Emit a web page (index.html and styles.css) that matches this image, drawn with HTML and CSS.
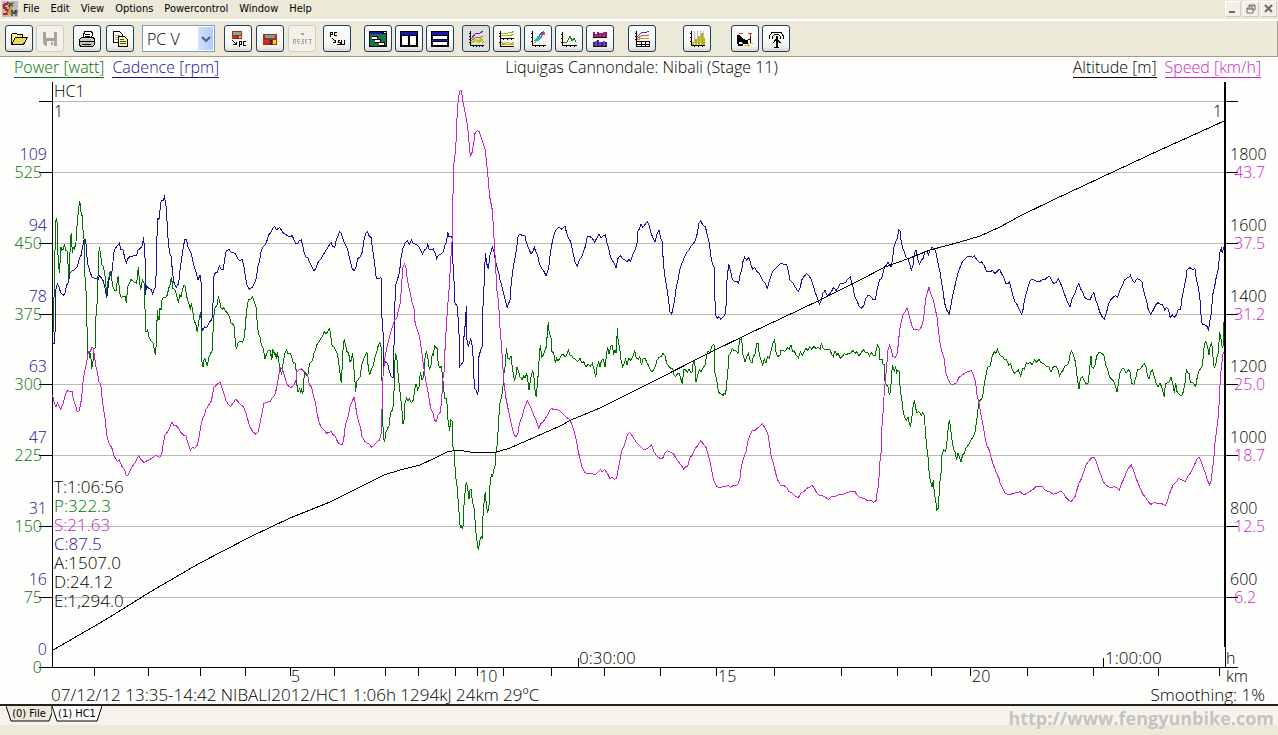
FILE: index.html
```html
<!DOCTYPE html>
<html lang="en">
<head>
<meta charset="utf-8">
<title>Liquigas Cannondale: Nibali (Stage 11)</title>
<link rel="stylesheet" href="styles.css">
</head>
<body>
<header class="menubar">
  <svg class="app-icon" viewBox="0 0 16 16"><rect width="16" height="16" fill="#c2b8b8"/><path d="M0 3h3v3H0zM9 1h3v2H9zM12 9h4v3h-4z" fill="#8f9a98"/><path d="M6 3H3v1H2v3h2v2h2v3H5v1H1" fill="none" stroke="#c8201c" stroke-width="2"/><path d="M5 1l3 2 3 0M8 3v7M6 5h5" fill="none" stroke="#222" stroke-width="1"/><path d="M9 5v9M6 13l2-5" fill="none" stroke="#c9a52c" stroke-width="2"/><path d="M10 15V9l2 4 2-4v6" fill="none" stroke="#222"/></svg>
  <nav class="menus">
    <button>File</button><button>Edit</button><button>View</button><button>Options</button><button>Powercontrol</button><button>Window</button><button>Help</button>
  </nav>
  <div class="winctl">
    <button aria-label="Minimize"><svg viewBox="0 0 10 10"><path d="M1 7h6v2H1z" fill="#6f6b62"/></svg></button>
    <button aria-label="Restore"><svg viewBox="0 0 10 10"><path d="M3 3V1h6v5H7M3 2h6M1 4h6v5H1zM1 5h6" fill="none" stroke="#6f6b62"/></svg></button>
    <button aria-label="Close"><svg viewBox="0 0 10 10"><path d="M1 1l7 7M8 1L1 8" fill="none" stroke="#6f6b62" stroke-width="2"/></svg></button>
  </div>
</header>

<div class="toolbar" role="toolbar" aria-label="Tools">
  <div class="group">
    <button class="tool" aria-label="Open"><svg viewBox="0 0 18 18"><path d="M1.500 14.500v-10l1-1h4l1 1h5v3" fill="#f4ee80" stroke="#000"/><path d="M1.500 14.500l4-7h12l-4 7z" fill="#e8dc54" stroke="#000"/></svg></button>
    <button class="tool off" aria-label="Save" disabled><svg viewBox="0 0 18 18"><path d="M2 2h14v14H4l-2-2z" fill="#a6a49b"/><path d="M5 2h8v6H5zM6 11h7v5H6z" fill="#f3f1ea"/><path d="M10 12h2v3h-2z" fill="#a6a49b"/></svg></button>
  </div>
  <div class="group print">
    <button class="tool" aria-label="Print"><svg viewBox="0 0 18 18"><path d="M4.500 9.500l2-8h7l1 2-1 6" fill="#fff" stroke="#000"/><path d="M7 4h5M7 6h5" stroke="#000"/><path d="M1.500 9.500l2-2h12l1 2v5l-2 2h-12l-1-2z" fill="#c5c6bb" stroke="#000"/><path d="M2 11.500h14M4 14.500h9" stroke="#000"/></svg></button>
    <button class="tool" aria-label="Copy"><svg viewBox="0 0 18 18"><path d="M2.500 1.500h6l3 3v8h-9z" fill="#fff" stroke="#000"/><path d="M4 5.500h5M4 7.500h5M4 9.500h4" stroke="#aaa33d"/><path d="M7.500 6.500h6l3 3v7h-9z" fill="#fff7a8" stroke="#000"/><path d="M9 9.500h4M9 11.500h6M9 13.500h6" stroke="#4b4930"/></svg></button>
  </div>
  <div class="combo"><select aria-label="Device"><option>PC V</option></select><span class="drop"><svg viewBox="0 0 10 8"><path d="M1 2l4 4 4-4" fill="none" stroke="#4d6185" stroke-width="2"/></svg></span></div>
  <div class="group device">
    <button class="tool" aria-label="Download to PC"><svg viewBox="0 0 18 18"><path d="M3 1h10v8H3z" fill="#a22d22"/><path d="M4 2h8v3H4z" fill="#8ea39b"/><path d="M3 6h4v2H3z" fill="#d42a22"/><path d="M10 6h2v2h-2z" fill="#f0cf30"/><path d="M3 10l4 4M4 14.500h3M7.500 12v3M10.500 17v-6h2v3h-2M17 11.500h-2.500v4H17" fill="none" stroke="#000"/></svg></button>
    <button class="tool" aria-label="Device settings"><svg viewBox="0 0 18 18"><path d="M2 4h14v11H2z" fill="#a82d22"/><path d="M4 5h10v3H4z" fill="#69a6a0"/><path d="M2 10h6v3H2z" fill="#e12a22"/><path d="M12 10h3v4h-3z" fill="#f3d12f"/><path d="M9 10h2v2H9zM9 13h2v2H9z" fill="#282828"/></svg></button>
    <button class="tool off" aria-label="Reset" disabled><svg viewBox="0 0 22 18"><path d="M10 2h3v3h-3z" fill="#a5a39b"/><path d="M1.500 14V9.500h2v2h-2M3.500 14v-2M9 9.500H6.500v4H9M7 11.500h2M13 9.500h-2v2h2v2h-3M17 9.500h-2v4h2M15 11.500h2M18 9.500h4M20.500 9v5" fill="none" stroke="#a5a39b"/></svg></button>
  </div>
  <div class="group convert">
    <button class="tool" aria-label="Convert"><svg viewBox="0 0 18 18"><path d="M2.500 7V2.500h2v2h-2M9 2.500H6.500v3H9M4 8l4 4M5 12.500h3M7.500 10v3M12 10.500h-2v2h2v2h-3M13.500 10v4h3v-4" fill="none" stroke="#000"/></svg></button>
  </div>
  <div class="group windows">
    <button class="tool" aria-label="Cascade"><svg viewBox="0 0 18 18"><path d="M0 1h18v16H0z"/><path d="M1 4h16v12H1z" fill="#1b7250"/><path d="M1 2h12v2H1z" fill="#1618b4"/><path d="M15 2h2v1h-2z" fill="#fff"/><path d="M3 6h6v4H3zM6 9h6v4H6zM10 12h6v4h-6z"/><path d="M3 7h5v2H3zM6 10h5v2H6zM10 13h5v2h-5z" fill="#fff"/></svg></button>
    <button class="tool" aria-label="Tile vertically"><svg viewBox="0 0 18 18"><path d="M0 1h18v16H0z"/><path d="M1 2h16v3H1z" fill="#1618b4"/><path d="M2 6h6v9H2zM10 6h6v9h-6z" fill="#fff"/></svg></button>
    <button class="tool" aria-label="Tile horizontally"><svg viewBox="0 0 18 18"><path d="M0 1h18v16H0z"/><path d="M1 2h16v3H1zM1 10h16v1H1z" fill="#1618b4"/><path d="M2 6h14v3H2zM2 12h14v3H2z" fill="#fff"/></svg></button>
  </div>
  <div class="group views">
    <button class="tool on" aria-label="Overlay chart"><svg viewBox="0 0 18 18"><path d="M3.500 1v14.500H17M2 3h2M2 6h2M2 9h2M2 12h2M6 17v-2M9 17v-2M12 17v-2M15 17v-2" fill="none" stroke="#000"/><path d="M4 9l5-6 3 1 4-3" fill="none" stroke="#5b2ab0"/><path d="M4 11l5-4 3 1 4-2" fill="none" stroke="#e0503c"/><path d="M4 13l5-3 3 2 2-3 3 4" fill="none" stroke="#a9d020" stroke-width="2"/></svg></button>
    <button class="tool" aria-label="Stacked chart"><svg viewBox="0 0 18 18"><path d="M2.500 1v7.500H16M2.500 9v7.500H16M1 3h2M1 6h2M1 12h2M5 8v2M9 8v2M13 8v2" fill="none" stroke="#000"/><path d="M3 4l3-1 3 1 2-2 2 1 3-2M3 6l4-1 4 1 5-2" fill="none" stroke="#94bb22"/><path d="M3 12l3 2 3-2 4 2 3-2M3 14h13" fill="none" stroke="#d3a820"/></svg></button>
    <button class="tool" aria-label="Scatter chart"><svg viewBox="0 0 18 18"><path d="M3.500 1v14.500H17M2 3h2M2 7h2M2 11h2M6 17v-2M10 17v-2M14 17v-2" fill="none" stroke="#000"/><path d="M6 11l4-5M8 11l4-4" stroke="#27b3d0" stroke-width="2"/><path d="M10 5l5-3" stroke="#3450ca" stroke-width="2"/><path d="M12 6l4-3" stroke="#e25a31" stroke-width="2"/><path d="M4 14l4-3" stroke="#c6b527"/></svg></button>
    <button class="tool" aria-label="Distribution chart"><svg viewBox="0 0 18 18"><path d="M2.500 2v13.500H17M1 4h2M1 8h2M1 12h2M6 17v-2M10 17v-2M14 17v-2" fill="none" stroke="#000"/><path d="M3 12l4 0 2-4 1-2 2 5 2-3 2 4" fill="none" stroke="#2c7a2e"/></svg></button>
    <button class="tool" aria-label="Histogram"><svg viewBox="0 0 18 18"><path d="M2 7.500h14M2 16.500h14" stroke="#111"/><path d="M3 7V2M7 7V2M11 7V3M15 7V2" stroke="#7c2086" stroke-width="2"/><path d="M5 7V4M9 7V3M13 7V2" stroke="#c62a4a" stroke-width="2"/><path d="M3 16v-4M7 16v-6M11 16v-4M15 16v-4" stroke="#2a24a0" stroke-width="2"/><path d="M5 16v-5M9 16v-4M13 16v-5" stroke="#8d3d97" stroke-width="2"/></svg></button>
  </div>
  <div class="group table">
    <button class="tool" aria-label="Chart with table"><svg viewBox="0 0 18 18"><path d="M3.500 1v10M2 3h2M2 6h2M2 9h2" stroke="#000"/><path d="M4 7l5-5 3 1 4-2" fill="none" stroke="#5b2ab0"/><path d="M4 9l5-4 3 1 4-1" fill="none" stroke="#e0503c"/><path d="M4 10l5-2 3 1 4-1" fill="none" stroke="#e38a3a"/><path d="M3.500 11.500h13v5h-13zM3 14h14M8 11v6M12 11v6" fill="#fff" stroke="#000"/></svg></button>
  </div>
  <div class="group bars">
    <button class="tool" aria-label="Bar chart"><svg viewBox="0 0 18 18"><path d="M6 1v12M9 1v12M12 1v12M15 1v12" stroke="#bbb"/><path d="M3.500 1v14.500H17M2 3h2M2 7h2M2 11h2M6 17v-2M10 17v-2M14 17v-2" fill="none" stroke="#000"/><path d="M5 15v-3M8 15V9M11 15V6M14 15V3M16 15V8" stroke="#b7b30a" stroke-width="2"/></svg></button>
  </div>
  <div class="group bike">
    <button class="tool" aria-label="Rider position"><svg viewBox="0 0 18 18"><path d="M1 5h2l3 3 4 2 2 2v2H8l-3-2H3v2H1z"/><path d="M10 11l4-2V5M14 9v5" fill="none" stroke="#000"/><path d="M3 3.500h4M12 3.500h4M14.500 4v3" stroke="#e33a2c"/><path d="M2 14h5v2H2z"/><path d="M8 15.500h6M12 13v4M14 13.500h3" stroke="#cbb62b"/></svg></button>
    <button class="tool" aria-label="Transmit"><svg viewBox="0 0 18 18"><path d="M9 6v11M10 6v11M7 17.500h5M9.500 9L6 13M9.500 9l4 4" fill="none" stroke="#000"/><path d="M2.500 9V6l3-4h8l3 4v3M5.500 9V7l2-3h4l2 3v2" fill="none" stroke="#000"/></svg></button>
  </div>
</div>

<main class="view">
  <div class="legend">
    <div class="side"><span class="power">Power [watt]</span><span class="cadence">Cadence [rpm]</span></div>
    <h1>Liquigas Cannondale: Nibali (Stage 11)</h1>
    <div class="side right"><span class="altitude">Altitude [m]</span><span class="speed">Speed [km/h]</span></div>
  </div>
  <svg class="chart" viewBox="0 80 1278 605" preserveAspectRatio="none" role="img" aria-label="Ride chart">
    <path class="grid" d="M53 101.500H1224M53 172.500H1224M53 243.500H1224M53 314.500H1224M53 384.500H1224M53 455.500H1224M53 526.500H1224M53 597.500H1224"/>
    <g class="labels power" text-anchor="end">
      <text x="42" y="178">525</text><text x="42" y="249">450</text><text x="42" y="320">375</text><text x="42" y="390">300</text><text x="42" y="461">225</text><text x="42" y="532">150</text><text x="42" y="603">75</text><text x="42" y="673">0</text>
    </g>
    <g class="labels cadence" text-anchor="end">
      <text x="47" y="160">109</text><text x="47" y="231">94</text><text x="47" y="302">78</text><text x="47" y="372">63</text><text x="47" y="443">47</text><text x="47" y="514">31</text><text x="47" y="585">16</text><text x="47" y="655">0</text>
    </g>
    <g class="labels altitude">
      <text x="1230" y="160">1800</text><text x="1230" y="231">1600</text><text x="1230" y="302">1400</text><text x="1230" y="372">1200</text><text x="1230" y="443">1000</text><text x="1230" y="514">800</text><text x="1230" y="585">600</text>
      <text x="1226" y="664">h</text><text x="1226" y="682">km</text>
    </g>
    <g class="labels speed">
      <text x="1234" y="178">43.7</text><text x="1234" y="249">37.5</text><text x="1234" y="320">31.2</text><text x="1234" y="390">25.0</text><text x="1234" y="461">18.7</text><text x="1234" y="532">12.5</text><text x="1234" y="603">6.2</text>
    </g>
    <path class="axis" d="M52.500 82V667M39 101.500H52M39 172.500H52M39 243.500H52M39 314.500H52M39 384.500H52M39 455.500H52M39 526.500H52M39 597.500H52M39 667.500H1238M1225.500 640V667M1226 101.500h12M1226 172.500h12M1226 243.500h12M1226 314.500h12M1226 384.500h12M1226 455.500h12M1226 526.500h12M1226 597.500h12"/>
    <path class="axis" d="M94.500 668v8M148.500 668v8M200.500 668v8M245.500 668v8M290.500 668v8M334.500 668v8M385.500 668v8M418.500 668v8M455.500 668v8M477.500 668v8M503.500 668v8M551.500 668v8M604.500 668v8M660.500 668v8M716.500 668v8M774.500 668v8M841.500 668v8M897.500 668v8M931.500 668v8M970.500 668v8M1027.500 668v8M1093.500 668v8M1158.500 668v8M1219.500 668v8M578.500 658v9M1103.500 658v9"/>
    <path class="edge" d="M1225 82V647"/>
    <g class="labels altitude">
      <text x="54" y="97">HC1</text><text x="54" y="117">1</text><text x="1213" y="117">1</text>
      <text x="291" y="682">5</text><text x="479" y="682">10</text><text x="718" y="682">15</text><text x="972" y="682">20</text>
    </g>
    <g class="labels readout">
      <text class="altitude" x="579" y="664">0:30:00</text><text class="altitude" x="1105" y="664">1:00:00</text>
      <text class="altitude" x="54" y="493">T:1:06:56</text><text class="power" x="54" y="512">P:322.3</text><text class="speed" x="54" y="531">S:21.63</text><text class="cadence" x="54" y="550">C:87.5</text><text class="altitude" x="54" y="569">A:1507.0</text><text class="altitude" x="54" y="588">D:24.12</text><text class="altitude" x="54" y="607">E:1,294.0</text>
    </g>

    <g class="trace power">
      <polyline transform="translate(0 180) scale(.33333)" points="160,455 163,300 167,125 169,118 172,130 172,190 175,240 178,278 181,235 183,200 185,210 190,208 193,192 197,210 201,213 204,250 206,302 209,250 211,180 214,158 217,220 220,200 223,210 228,185 230,150 234,105 239,62 243,95 247,110 250,170 253,180 255,290 258,330 261,440 263,525 267,515 269,535 272,520 275,568 279,545 281,505 285,505 288,410 292,360 294,290 296,225 298,200 302,225 306,255 310,260 314,280 317,305 320,348 323,310 327,290 331,272 335,295 338,320 343,330 348,332 352,300 355,287 359,340 363,352 370,350 375,348 379,369 383,320 388,310 393,298 398,303 405,308 410,310 415,262 418,300 422,330 427,300 432,310 434,330 436,440 438,457 443,450 448,475 455,485 460,490 463,510 466,525 469,490 472,390 475,415 477,420 480,385 483,390 486,360 490,352 497,352 502,345 506,325 510,315 514,290 519,325 525,330 530,345 535,368 539,345 543,350 547,330 552,315 556,320 559,345 563,360 568,375 571,390 574,370 578,390 582,420 588,435 592,457 597,420 602,395 604,430 606,545 609,562 613,535 616,540 622,558 627,530 632,520 637,510 640,430 643,395 646,380 650,380 655,352 659,362 663,385 667,388 672,383 677,393 683,400 688,410 693,430 698,432 703,440 706,490 709,508 714,490 720,483 727,487 732,475 736,440 739,400 743,370 747,357 752,360 757,350 763,365 768,380 771,420 775,460 780,470 784,495 790,505 795,537 800,520 805,512 811,512 815,540 820,512 825,520 829,535 833,522 837,550 840,562"/>
      <polyline transform="translate(270 180) scale(.33333)" points="0,520 4,530 8,512 13,522 18,528 22,520 27,548 30,562 35,585 40,545 45,520 50,510 54,522 60,520 65,530 70,550 75,548 79,575 80,610 84,635 89,625 92,640 95,625 97,640 100,635 101,600 104,580 109,585 113,590 116,565 120,550 124,545 128,540 132,520 137,508 142,490 148,485 152,475 158,468 163,455 168,462 173,455 179,445 183,475 187,500 191,500 196,510 201,518 205,540 209,570 214,610 217,550 220,490 223,480 227,495 231,515 236,520 240,545 244,540 248,518 251,560 254,590 257,635 260,605 264,600 270,590 275,555 280,540 286,525 291,518 295,565 299,585 305,565 310,555 315,530 320,518 325,495 329,487 333,500 336,600 338,720 341,775 344,785 348,755 353,745 358,735 361,700 367,690 371,670 373,600 375,540 377,518 381,540 385,590 390,635 395,680 399,733 403,715 405,670 410,655 414,662 418,655 424,668 430,660 434,630 438,612 443,628 448,620 451,575 456,600 461,590 464,540 469,513 473,530 478,570 483,555 487,520 490,525 494,498 501,505 505,555 509,562 514,560 518,590 521,630 525,655 530,655 534,720 539,752 542,720 546,722 549,800 553,815 555,860 557,895"/>
      <polyline transform="translate(430 80) scale(.33333)" points="77,1195 79,1200 82,1225 85,1270 88,1310 91,1345 94,1338 97,1345 100,1335 102,1275 105,1240 109,1205 113,1225 117,1257 120,1230 124,1230 127,1265 132,1285 135,1320 139,1370 145,1410 149,1385 153,1370 157,1375 159,1310 162,1270 166,1235 169,1275 173,1300 177,1275 180,1215 184,1185 188,1190 191,1170 195,1160 198,1120 202,1090 205,1040 208,990 211,960 214,955 218,930 220,905 223,865 226,860 229,805 233,835 238,838 243,827 247,865 253,900 257,895 261,860 266,875 270,890 276,900 281,888 285,895 290,880 294,905 297,930 302,895 308,870 312,895 316,940 319,952 323,900 326,870 328,820 331,795 335,830 340,825 345,810 349,800 352,760 355,725 358,765 360,765"/>
      <polyline transform="translate(500 200) scale(.33333)" points="150,405 155,420 155,455 160,457 163,468 166,488 170,475 174,483 180,475 185,465 191,465 196,470 200,465 205,450 210,465 215,467 220,475 226,478 233,485 240,475 245,488 251,485 257,500 265,493 271,498 277,490 282,508 287,532 291,500 296,485 300,500 305,480 310,478 315,500 320,460 323,440 327,462 332,440 336,435 341,460 345,450 349,460 352,385 355,430 359,440 362,475 368,500 373,490 377,478 381,495 386,475 392,480 398,470 404,452 409,475 415,478 419,470 424,495 430,475 436,475 440,488 445,495 450,508 456,517 461,508 466,500 471,480 478,472 484,470 489,460 495,468 500,490 506,498 512,505 518,505 522,525 527,530 533,520 538,520 542,535 547,552 551,510 557,510 562,518 567,508 572,518 577,515 580,480 584,482 588,545 593,525 598,510 604,515 608,505 615,495 620,465 624,452 629,460 635,440 638,435 642,433 645,470 645,520 650,540 655,575 660,580 665,583 669,587 672,580 677,583 680,550 684,510 686,465 691,462 697,445 702,452 708,452 714,460 719,420 725,415 729,465 735,485 740,470 745,460 750,480 756,490 760,470 766,460 770,430 774,430 778,465 783,480 788,495 793,478 798,490 803,470 808,475 814,450 820,425 824,420 828,455 833,470 840,465"/>
      <polyline transform="translate(780 200) scale(.33333)" points="0,465 2,452 8,450 14,455 18,450 23,443 28,447 33,435 38,455 43,452 48,465 55,473 61,455 67,465 72,455 78,445 83,450 90,440 95,447 102,440 108,445 115,442 121,447 124,430 129,445 135,448 142,450 150,450 156,465 160,470 165,452 170,465 174,460 181,475 188,468 193,460 198,465 205,460 213,460 219,450 225,460 231,455 237,468 243,460 250,448 256,458 263,458 268,468 275,458 280,468 286,468 289,445 293,435 297,445 300,478 306,478 309,492 313,495 314,540 319,555 324,560 328,585 332,572 335,515 338,500 343,512 347,502 350,518 354,510 357,512 359,545 362,580 367,610 370,640 375,655 380,660 384,650 387,665 391,678 395,660 398,625 403,600 407,625 411,638 417,635 424,645 428,637 433,648 436,690 440,740 445,780 448,830 453,850 456,860 460,840 463,880 467,900 470,930 475,925 477,890 479,850 483,820 486,765 491,750 497,755 500,735 504,690 508,660 512,685 515,715 520,745 525,755 530,780 534,760 538,770 543,785 548,765 553,760 558,745 565,735 572,722 580,710 585,695 589,670 593,640 596,605 602,600 608,590 611,565 615,540 619,520 623,502 631,498 635,475 642,455 648,460 652,448 657,460 660,466"/>
      <polyline transform="translate(1000 200) scale(.33333)" points="0,466 8,470 13,480 20,480 26,495 32,490 37,510 44,520 50,515 55,510 62,528 68,505 73,508 79,488 85,490 91,488 96,495 103,480 110,487 117,477 123,488 130,490 135,495 141,500 146,498 153,517 160,500 168,498 174,510 179,528 185,515 190,510 195,497 201,495 206,490 210,465 214,453 219,462 224,475 228,500 232,535 237,567 241,535 247,530 252,540 258,553 265,548 270,495 273,467 275,500 280,505 285,495 290,468 297,458 307,460 313,470 317,495 323,510 328,530 335,538 341,543 347,560 351,577 356,545 360,518 367,505 373,507 378,520 385,510 390,515 395,550 402,553 408,530 412,510 419,508 426,500 433,490 438,500 443,530 447,538 452,515 457,510 463,530 468,550 474,560 480,548 486,565 490,580 493,590 496,552 502,548 508,545 513,532 518,550 523,580 527,550 531,575 538,583 545,588 550,575 555,550 559,510 564,520 568,520 571,548 577,547 582,552 587,560 592,530 596,515 602,505 608,495 610,460 614,430 618,425 623,440 627,465 631,435 635,428 639,470 643,505 648,490 652,465 656,460 658,395 662,410 667,445 670,435 671,365"/>
    </g>
    <g class="trace cadence">
      <polyline transform="translate(0 180) scale(.33333)" points="158,493 163,490 165,460 167,380 167,330 172,310 176,318 182,338 190,346 195,340 200,315 206,305 209,280 215,273 225,268 232,260 238,235 244,225 247,205 252,180 257,178 260,220 263,250 270,275 276,292 290,297 294,300 298,287 304,293 310,303 315,325 320,355 324,325 328,290 333,285 337,270 341,220 346,205 352,197 358,190 363,210 369,210 374,232 379,250 384,235 390,229 400,228 410,225 414,210 420,206 427,197 431,170 433,205 436,250 436,345 440,318 446,325 453,328 458,341 462,330 467,320 470,230 472,115 477,118 480,90 484,60 489,62 493,50 497,68 500,95 502,150 505,185 509,220 513,228 517,270 521,305 529,323 536,310 540,270 545,235 550,200 555,177 560,180 564,200 568,210 574,222 578,240 583,262 589,280 594,300 600,285 603,300 605,440 608,450 614,441 620,443 626,430 634,420 638,410 641,290 646,278 652,278 658,258 665,270 670,270 674,235 679,212 687,208 693,217 700,218 707,222 714,238 720,242 726,238 731,255 736,290 741,315 747,328 757,322 766,305 770,290 773,260 778,245 784,210 790,200 795,195 800,185 806,165 812,158 818,145 824,140 829,150 835,145 840,142"/>
      <polyline transform="translate(270 180) scale(.33333)" points="30,143 38,157 45,162 52,167 60,170 67,167 72,180 78,190 84,190 88,182 94,180 99,200 103,222 108,232 113,232 118,245 125,258 132,273 139,262 145,245 152,238 158,228 165,215 172,205 178,195 184,188 188,200 194,202 199,180 205,165 209,155 214,160 219,178 225,192 232,205 239,235 245,262 252,273 258,260 263,235 270,232 277,215 283,175 288,160 292,155 297,167 303,172 308,210 314,250 319,297 326,297 333,292 335,400 340,470 341,560 347,545 353,550 357,570 364,590 370,592 372,500 376,320 382,300 389,275 392,240 399,205 405,190 412,182 418,192 424,180 430,190 438,193 446,200 452,210 458,222 464,210 470,205 473,190 478,210 484,210 490,207 496,222 500,235 506,225 513,222 520,215 525,195 530,185 533,155 537,170 543,168 547,175 549,250 553,320 555,368 562,380 566,440 569,500 569,560 575,552 580,545 582,470 586,430 589,378 591,480 595,500 602,475 607,500 610,540 613,625 618,630 622,642 626,630 627,530 632,510 637,500 639,380 643,300 646,220 650,250 655,267 660,225 667,202 672,215 677,245 683,270 690,290 690,300"/>
      <polyline transform="translate(500 200) scale(.33333)" points="0,240 6,260 13,290 20,318 22,320 30,300 34,245 40,200 46,170 50,145 54,110 60,102 67,107 74,105 80,130 86,145 93,162 98,155 103,142 107,155 113,165 118,190 125,205 131,212 138,227 143,215 147,195 151,160 157,125 163,100 170,87 178,82 185,87 195,78 200,100 206,115 212,125 217,150 222,170 226,190 232,198 238,180 245,172 250,155 256,140 262,108 270,110 277,115 284,127 290,115 297,103 303,113 309,108 316,105 321,130 326,145 331,170 337,182 343,190 348,203 354,175 361,167 368,177 374,178 380,185 387,178 392,183 398,165 405,150 411,130 413,95 419,85 423,72 429,82 436,72 442,65 447,75 452,95 459,115 465,125 470,105 477,90 482,115 487,125 490,190 495,230 500,260 505,295 510,335 515,342 520,320 525,290 529,260 534,240 539,210 546,190 553,172 560,158 567,150 573,138 580,130 586,122 592,100 597,70 602,62 608,75 616,80 622,105 628,130 632,165 637,190 642,200 644,260 646,345 652,355 656,350 662,357 668,353 675,343 679,310 681,240 686,193 691,210 696,235 703,245 710,243 716,250 720,225 725,210 729,185 734,172 740,180 747,173 753,195 758,207 764,202 770,215 777,218 783,230 790,245 797,250 802,268 807,245 812,230 818,215 825,207 832,200 840,193"/>
      <polyline transform="translate(780 200) scale(.33333)" points="0,190 10,192 20,195 25,215 30,240 38,248 46,262 55,275 61,262 65,240 72,230 80,220 88,230 94,238 99,255 105,275 112,295 118,312 124,300 129,280 135,270 142,288 148,283 154,275 161,262 168,272 175,262 181,250 188,250 197,247 205,235 211,230 214,245 219,260 224,290 230,300 237,318 246,325 252,315 257,295 265,286 273,290 279,300 286,298 292,265 299,240 305,235 310,215 315,198 320,195 324,185 328,195 334,200 337,180 342,140 347,125 352,115 356,90 360,92 363,120 368,145 373,155 377,170 383,175 389,190 394,210 399,195 403,160 408,150 412,175 418,193 424,180 430,175 434,155 440,155 445,165 450,150 456,143 462,145 467,155 470,170 475,195 480,215 485,250 490,280 494,310 500,330 508,342 513,315 517,290 523,265 529,240 535,215 541,200 547,185 554,178 562,170 570,168 577,172 583,168 590,178 598,188 604,185 612,195 620,215 628,215 638,212 645,222 650,215 658,208 660,210"/>
      <polyline transform="translate(1000 200) scale(.33333)" points="0,210 5,222 11,230 17,250 23,252 28,245 33,265 38,285 45,305 52,315 58,330 65,343 70,325 73,300 79,280 84,262 90,242 98,238 108,243 118,245 127,240 136,238 142,232 149,228 155,242 161,250 168,248 175,235 180,245 186,262 192,278 199,298 205,312 210,322 215,300 221,288 227,275 231,260 236,250 241,265 247,275 254,292 262,298 270,300 276,285 282,278 287,300 293,315 299,335 306,350 313,358 319,340 325,315 331,300 339,292 346,287 353,292 360,270 367,257 373,240 380,235 386,232 391,226 397,240 404,248 411,236 419,240 426,245 430,270 436,290 441,310 445,330 452,342 460,330 467,315 474,308 481,313 488,315 494,330 500,322 506,330 510,352 517,345 523,352 529,345 534,330 542,328 546,295 552,265 558,235 561,210 570,203 577,208 585,206 589,240 595,260 600,300 603,345 607,375 614,375 620,377 626,390 630,360 634,340 638,285 644,260 649,230 655,205 660,155 664,145 667,160 671,140"/>
    </g>
    <g class="trace speed">
      <polyline transform="translate(0 180) scale(.33333)" points="158,645 163,672 168,680 172,668 177,678 182,688 188,675 192,660 197,640 204,630 210,635 216,633 220,655 226,675 232,696 238,693 243,665 247,630 250,595 255,570 260,545 265,515 270,515 276,502 280,505 283,525 288,560 293,580 297,605 302,612 306,650 311,690 316,720 320,765 326,787 336,805 342,827 352,845 358,840 366,860 374,870 379,888 384,885 390,872 398,858 406,848 416,828 424,840 432,848 440,843 450,838 460,832 468,826 480,832 485,822 490,790 495,765 503,755 510,740 516,725 522,738 530,738 536,745 542,757 550,765 558,768 564,790 571,810 577,802 585,805 592,795 598,765 605,725 612,708 618,688 626,675 633,665 638,645 641,622 648,617 655,610 661,608 666,625 672,642 678,662 684,672 692,680 700,668 707,658 714,665 720,672 730,680 738,700 745,725 750,740 758,755 768,763 775,755 781,725 786,700 792,670 800,667 810,665 816,655 824,645 830,625 836,590 840,562"/>
      <polyline transform="translate(270 180) scale(.33333)" points="30,562 35,565 40,575 45,595 50,610 56,620 63,622 72,615 78,600 80,575 88,570 94,567 101,573 108,578 114,590 118,615 125,622 131,650 136,665 141,700 147,725 153,742 162,750 170,760 178,757 184,755 190,765 197,770 203,787 210,792 216,795 221,780 224,750 229,725 235,708 240,680 246,665 252,652 256,670 260,700 267,730 272,745 276,770 284,783 292,790 298,792 303,802 312,795 320,787 328,780 333,765 336,690 338,600 342,560 345,530 349,510 355,485 360,465 367,440 374,420 380,415 385,390 391,370 395,310 399,260 404,250 408,265 411,290 416,320 422,345 427,370 432,385 434,420 440,445 446,460 450,480 455,515 461,560 466,595 472,625 477,655 482,685 489,700 493,720 499,725 504,705 510,698 515,665 518,600 523,570 525,510 529,440 533,380 538,320 542,240 546,190"/>
      <polyline transform="translate(430 80) scale(.33333)" points="66,490 67,420 68,360 71,310 72,250 77,210 80,140 82,90 86,50 90,32 94,32 98,60 102,80 107,105 113,140 117,185 121,230 127,215 131,190 135,160 142,152 148,155 153,170 159,190 166,210 170,250 175,300 179,350 187,390 190,440 193,490 197,560 200,625 206,670 209,730 213,780 218,850 221,900 227,950 235,990 241,1020 247,1045 253,1065 259,1070 264,1060 268,1030 276,1010 284,980 292,962 299,975 305,990 311,1005 318,1020 326,1045 333,1030 340,1025 350,1010 360,990"/>
      <polyline transform="translate(500 200) scale(.33333)" points="150,630 155,625 162,630 170,628 180,633 190,643 200,652 210,660 218,680 224,700 230,725 235,755 241,780 246,800 254,818 264,820 275,820 285,825 295,815 301,808 306,815 314,808 322,820 330,835 337,833 343,838 350,835 354,810 360,780 365,752 371,740 377,725 382,705 388,697 394,703 401,715 410,728 420,738 432,750 442,745 455,735 462,755 470,768 480,775 488,775 494,760 503,752 512,758 520,760 527,773 535,785 543,795 551,807 558,800 563,798 569,775 577,765 584,748 592,738 602,722 610,732 618,742 625,765 630,785 635,810 641,840 650,860 660,862 672,860 685,857 692,862 702,855 710,857 715,850 720,835 724,800 730,775 738,755 743,725 750,705 757,692 765,692 771,685 780,678 787,672 794,682 803,700 808,730 813,765 820,790 827,820 833,840 840,852"/>
      <polyline transform="translate(780 200) scale(.33333)" points="0,855 12,857 20,862 27,875 37,880 45,888 55,893 64,877 72,875 80,865 88,862 96,855 103,865 110,878 118,887 130,888 138,893 146,898 154,890 165,890 175,885 188,885 200,878 212,875 225,873 230,885 240,893 252,895 262,902 272,900 280,907 288,902 291,880 296,855 299,790 303,760 305,690 309,640 312,590 317,530 320,500 324,450 329,435 334,450 339,470 346,472 352,460 355,430 359,390 364,365 370,340 376,335 381,325 386,340 391,360 396,378 402,388 410,388 416,391 424,382 431,355 434,325 438,290 443,275 447,262 454,285 460,300 465,325 471,350 475,390 480,430 487,460 493,478 497,515 503,535 510,550 517,555 524,550 530,548 537,532 546,525 556,518 565,515 573,511 578,520 583,535 587,545 590,580 597,610 602,640 608,670 613,700 620,735 628,750 634,775 641,797 650,820 658,838 660,850"/>
      <polyline transform="translate(1000 200) scale(.33333)" points="0,850 6,862 14,878 22,883 35,882 48,878 60,875 68,882 75,883 85,877 97,870 108,860 120,860 128,860 136,872 148,875 160,883 170,880 182,873 190,880 198,892 205,900 212,905 219,898 225,890 230,872 237,850 245,835 251,815 258,795 265,785 275,773 283,772 289,785 296,808 303,825 308,842 318,855 330,863 342,860 350,863 358,870 365,850 372,835 378,820 385,805 394,795 400,810 407,830 414,850 421,865 428,882 437,893 445,905 453,913 463,907 475,912 485,910 495,918 502,905 507,885 513,870 519,855 527,848 536,835 545,840 556,845 563,830 574,815 583,795 592,775 598,772 604,785 610,805 617,820 622,840 629,855 634,840 637,810 641,780 645,730 650,690 656,640 659,570 664,500 670,455"/>
    </g>
    <polyline class="trace altitude" points="53,650 100,623 118,612 150,592 200,563 250,537 290,518 330,502 370,482 384,475 400,470 420,465 435,458 447,452 457,450 470,452 492,453 500,451 510,448 535,437 560,426 571,420 600,408 650,383 707,354 750,333 780,319 820,300 860,280 885,267 910,258 930,250 960,242 980,236 1000,227 1020,216 1053,200 1100,178 1160,150 1200,132 1224,121"/>
  </svg>
  <div class="summary"><span>07/12/12 13:35-14:42 NIBALI2012/HC1 1:06h 1294kJ 24km 29ºC</span><span>Smoothing: 1%</span></div>
</main>

<footer class="bottom">
  <div class="tabs">
    <button class="tab"><svg class="tab-shape" viewBox="0 0 46 16" preserveAspectRatio="none"><path d="M0 0l5 15h38l3-8V0" fill="#ece9d8" stroke="#000"/></svg><span>(0) File</span></button>
    <button class="tab current"><svg class="tab-shape" viewBox="0 0 50 16" preserveAspectRatio="none"><path d="M0 0l5 15h40l5-15" fill="#fefefc" stroke="#000"/></svg><span>(1) HC1</span></button>
  </div>
  <a class="site" href="http://www.fengyunbike.com">http://www.fengyunbike.com</a>
</footer>
</body>
</html>
```
FILE: styles.css
```css
* { box-sizing: border-box; }
body {
  margin: 0;
  min-height: 100vh;
  display: flex;
  flex-direction: column;
  background: #ece9d8;
  color: #000;
  font-family: "Noto Sans", "Open Sans", sans-serif;
}
button, select { font: inherit; color: inherit; border: 0; background: none; padding: 0; margin: 0; }
svg { display: block; }

.menubar { display: flex; align-items: center; height: 21px; padding: 0 0 2px 2px; border-bottom: 2px solid #fefefc; background: #ece9d8; }
.app-icon { width: 16px; height: 16px; }
.menus { display: flex; gap: 11px; margin-left: 5px; font-family: "DejaVu Sans Condensed", sans-serif; font-size: 11px; line-height: 16px; }
.winctl { display: flex; gap: 2px; margin-left: auto; padding-right: 1px; }
.winctl button { width: 16px; height: 16px; padding: 2px; background: #f2f0e6; border: 1px solid; border-color: #fff #d2cfc0 #d2cfc0 #fff; }
.winctl svg { width: 10px; height: 10px; }

.toolbar { display: flex; align-items: center; height: 36px; padding: 0 5px; background: #ece9d8; border-right: 1px solid #aca899; border-bottom: 1px solid #a59a88; }
.group { display: flex; gap: 3px; }
.print { gap: 5px; margin-left: 9px; }
.device { gap: 4px; margin-left: 9px; }
.convert { margin-left: 7px; }
.windows { margin-left: 13px; }
.views { margin-left: 8px; }
.table { margin-left: 14px; }
.bars { margin-left: 27px; }
.bike { margin-left: 20px; }
.tool { width: 28px; height: 27px; display: grid; place-items: center; border: 1px solid #1f3f66; border-radius: 3px; background: linear-gradient(#fff, #f3f3ee 80%, #dcd8cc); }
.tool svg { width: 18px; height: 18px; shape-rendering: crispEdges; }
.tool.off { border-color: #d0cdbf; background: #f3f1ea; }
.tool.off svg { width: 20px; }
.tool.on { background: #dedfda; }
.combo { position: relative; width: 73px; height: 27px; margin-left: 8px; border: 1px solid #7f9db9; background: #fefefe; }
.combo select { width: 100%; height: 100%; padding-left: 4px; appearance: none; font-family: "Open Sans", sans-serif; font-size: 16px; font-weight: 300; }
.drop { position: absolute; top: 1px; right: 1px; bottom: 1px; width: 15px; display: grid; place-items: center; background: linear-gradient(90deg, #d3e0fd, #b4c9f8); pointer-events: none; }
.drop svg { width: 10px; height: 8px; }

.view { flex: 1; display: flex; flex-direction: column; background: #fefefc; font-family: "Open Sans", sans-serif; font-size: 16px; font-weight: 300; border-bottom: 2px solid #222; }
.legend { display: grid; grid-template-columns: 1fr auto 1fr; height: 23px; padding: 0 17px 0 14px; line-height: 20px; }
.legend h1 { margin: 0; padding-left: 8px; font: inherit; }
.side { display: flex; gap: 8px; align-items: flex-start; }
.side.right { justify-content: flex-end; }
.side span { border-bottom: 1px solid; }
.chart { flex: 1; width: 100%; min-height: 0; overflow: visible; }
.summary { display: flex; justify-content: space-between; height: 19px; padding: 0 13px 0 51px; line-height: 19px; font-size: 17px; }

.power { color: #007000; }
.cadence { color: #1d109c; }
.altitude { color: #000; }
.speed { color: #c824c8; }
.labels text { fill: currentColor; font-size: 16px; }
.readout text { font-size: 17px; }
.grid { fill: none; stroke: #b9b9b9; shape-rendering: crispEdges; }
.axis { fill: none; stroke: #000; shape-rendering: crispEdges; }
.edge { stroke: #000; stroke-width: 2px; shape-rendering: crispEdges; }
.trace { fill: none; stroke: currentColor; stroke-width: 1px; shape-rendering: crispEdges; }
.trace polyline { vector-effect: non-scaling-stroke; }

.bottom { display: flex; justify-content: space-between; height: 29px; padding: 0 4px 0 6px; background: linear-gradient(#f5f3ea 19px, #ece9d8 19px); }
.tabs { display: flex; height: 16px; }
.tab { position: relative; width: 46px; font-family: "DejaVu Sans Condensed", sans-serif; font-size: 11px; line-height: 14px; }
.tab.current { width: 50px; }
.tab span { position: relative; white-space: nowrap; }
.tab-shape { position: absolute; top: 0; left: 0; width: 100%; height: 100%; }
.site { font-family: "Open Sans", sans-serif; font-size: 18px; line-height: 24px; font-weight: 700; color: #c4c4c0; text-decoration: none; }
```
